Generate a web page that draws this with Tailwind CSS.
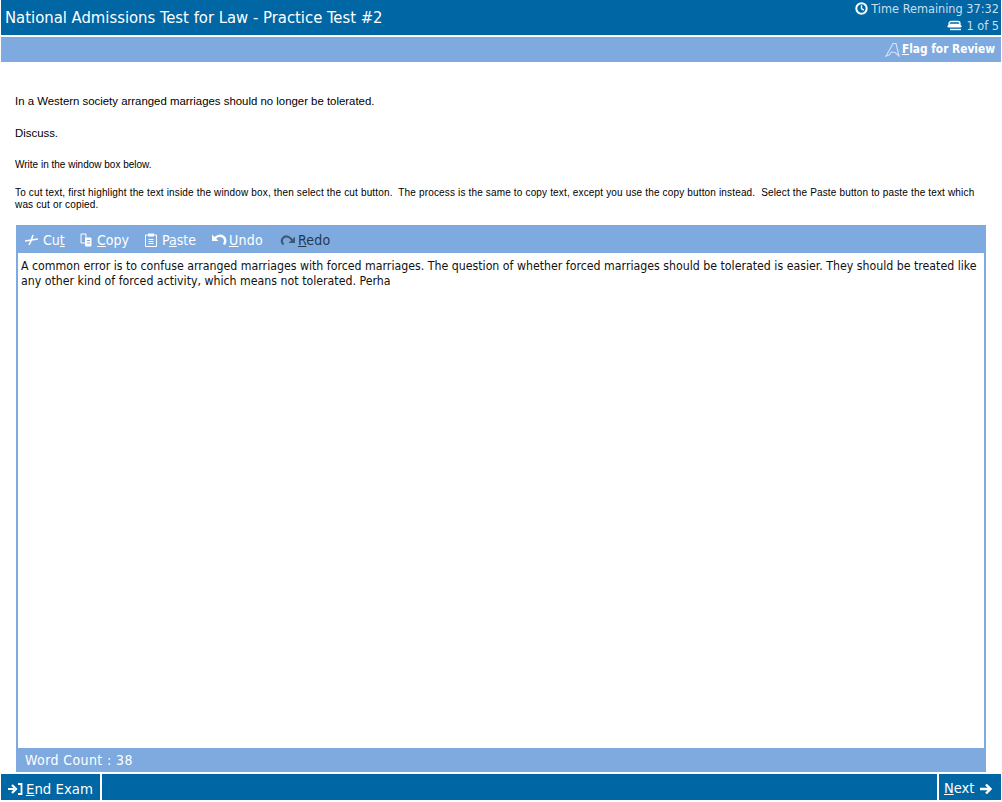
<!DOCTYPE html>
<html lang="en">
<head>
    <meta charset="UTF-8">
    <title>National Admissions Test for Law - Practice Test #2</title>
    <script src="https://cdn.jsdelivr.net/npm/@tailwindcss/browser@4"></script>
</head>
<body class="bg-white h-[802px] w-[1002px] overflow-hidden flex flex-col pl-px pr-px font-['DejaVu_Sans',sans-serif] [font-stretch:condensed]">
    <!-- header -->
    <div class="h-[35px] bg-[#0066a4] flex justify-between text-white shrink-0">
        <div class="text-[16.5px] leading-[36px] pl-1">National Admissions Test for Law - Practice Test #2</div>
        <div class="text-[12.6px] leading-[17px] text-right pr-0.5 text-[#c9dff0]">
            <div class="flex items-center justify-end gap-[3px]">
                <svg width="13" height="13" viewBox="0 0 13 13"><circle cx="6.500" cy="6.500" r="5.200" fill="none" stroke="white" stroke-width="2"/><path d="M6.500 3.200v3.500l2.300 1.500" fill="none" stroke="white" stroke-width="1.400"/></svg>
                <span>Time Remaining 37:32</span>
            </div>
            <div class="flex items-center justify-end gap-[3px]">
                <svg width="16" height="11" viewBox="0 0 16 11"><path d="M4 1.500h7a2 2 0 0 1 2 2v1H2v-1a2 2 0 0 1 2-2z" fill="none" stroke="white" stroke-width="1.300"/><rect x="0.500" y="5" width="14" height="2.500" rx="1.200" fill="white"/><path d="M3 9.500h11" stroke="white" stroke-width="1.400"/></svg>
                <span>1 of 5</span>
            </div>
        </div>
    </div>
    <!-- flag bar -->
    <div class="mt-0.5 h-[25px] bg-[#7eaadf] flex items-center justify-end pr-[6px] text-white text-[11.8px] shrink-0 font-bold gap-[2px]">
        <svg width="15" height="15" viewBox="0 0 15 15"><path d="M1 14 4.500 8 8 1.500h3L14 14 10 10.500 6.500 10 4 13z" fill="none" stroke="#d5e3f5" stroke-width="1.100"/></svg>
        <span><span class="underline">F</span>lag for Review</span>
    </div>
    <!-- question -->
    <div class="pl-3.5 pr-5 text-black font-['Liberation_Sans',sans-serif] [font-stretch:normal] shrink-0">
        <p class="mt-[32px] text-[11.4px] leading-[14px]">In a Western society arranged marriages should no longer be tolerated.</p>
        <p class="mt-[18px] text-[11.4px] leading-[14px]">Discuss.</p>
        <p class="mt-[19px] text-[10px] leading-[12px]">Write in the window box below.</p>
        <p class="mt-4 text-[10px] leading-[12px] tracking-[0.16px]">To cut text, first highlight the text inside the window box, then select the cut button.&nbsp; The process is the same to copy text, except you use the copy button instead.&nbsp; Select the Paste button to paste the text which was cut or copied.</p>
    </div>
    <!-- editor -->
    <div class="mt-[14px] mx-[15px] h-[547px] flex flex-col bg-[#7eaadf] shrink-0">
        <div class="h-[28px] pt-0.5 flex items-center pl-[9px] text-[14px] text-white shrink-0">
            <span class="flex items-center gap-1 w-[55px]">
                <svg width="14" height="12" viewBox="0 0 14 12"><path d="M0 7 13 5M8 1 6 7l-2 4" fill="none" stroke="white" stroke-width="1.600"/></svg>
                <span>Cu<span class="underline">t</span></span>
            </span>
            <span class="flex items-center gap-[5px] w-[65px]">
                <svg width="12" height="14" viewBox="0 0 12 14"><path d="M1 1h5v9H1z" fill="#7eaadf" stroke="white"/><path d="M5.500 5h5.500v8H5.500z" fill="white" stroke="white"/><path d="M2.500 3.500h2M2.500 6h2M7 7.500h3M7 10h3" stroke="#7eaadf"/></svg>
                <span><span class="underline">C</span>opy</span>
            </span>
            <span class="flex items-center gap-[5px] w-[67px]">
                <svg width="12" height="14" viewBox="0 0 12 14"><path d="M.500 2h11v11.500H.500z" fill="none" stroke="white"/><path d="M3 .500h6v3H3z" fill="white"/><path d="M3.500 6.500h5M3.500 8.500h5M3.500 10.500h5" stroke="white"/></svg>
                <span>P<span class="underline">a</span>ste</span>
            </span>
            <span class="flex items-center gap-[2px] w-[68px] tracking-[0.3px]">
                <svg width="15" height="13" viewBox="0 0 15 13"><path d="M0 .500v6.500h6.500z" fill="white"/><path d="M3 4.200C5 1.500 9 1 11.500 3c2.200 2 2 5 .5 7.500" fill="none" stroke="white" stroke-width="2.400"/></svg>
                <span><span class="underline">U</span>ndo</span>
            </span>
            <span class="flex items-center gap-[3px] tracking-[0.2px] text-[#23384f]">
                <svg width="15" height="13" viewBox="0 0 15 13"><path d="M15 2.500v6.500H8.500z" fill="#3f5a76"/><path d="M12 6.300C10 2.500 6 1.500 3.500 3.500c-2.300 2-2.300 5 0 7" fill="none" stroke="#3f5a76" stroke-width="2.200"/></svg>
                <span><span class="underline">R</span>edo</span>
            </span>
        </div>
        <div class="flex-1 bg-white mx-0.5 pl-[3px] pt-[6px] text-[12.25px] leading-[15px] text-[#111]">A common error is to confuse arranged marriages with forced marriages. The question of whether forced marriages should be tolerated is easier. They should be treated like any other kind of forced activity, which means not tolerated. Perha</div>
        <div class="h-[24px] flex items-center pl-[9px] text-[14px] tracking-[0.4px] text-white shrink-0">Word Count : 38</div>
    </div>
    <!-- footer -->
    <div class="mt-0.5 h-[26px] bg-[#0066a4] flex justify-between text-white text-[14.8px] shrink-0">
        <div class="w-[101px] border-r-2 border-white flex items-center pt-1 pl-[7px] gap-[3px]">
            <svg width="15" height="12" viewBox="0 0 15 12"><path d="M0 6h6M4 2l4 4-4 4" fill="none" stroke="white" stroke-width="2.200"/><path d="M10 1h3.500v10H10" fill="none" stroke="white" stroke-width="1.800"/></svg>
            <span><span class="underline">E</span>nd Exam</span>
        </div>
        <div class="w-[64px] border-l-2 border-white flex items-center pt-1 pl-[5px] gap-[6px] text-[14.500px]">
            <span><span class="underline">N</span>ext</span>
            <svg width="12" height="12" viewBox="0 0 12 12"><path d="M0 6h9M6 1.500 10.500 6 6 10.500" fill="none" stroke="white" stroke-width="2.400"/></svg>
        </div>
    </div>
</body>
</html>
